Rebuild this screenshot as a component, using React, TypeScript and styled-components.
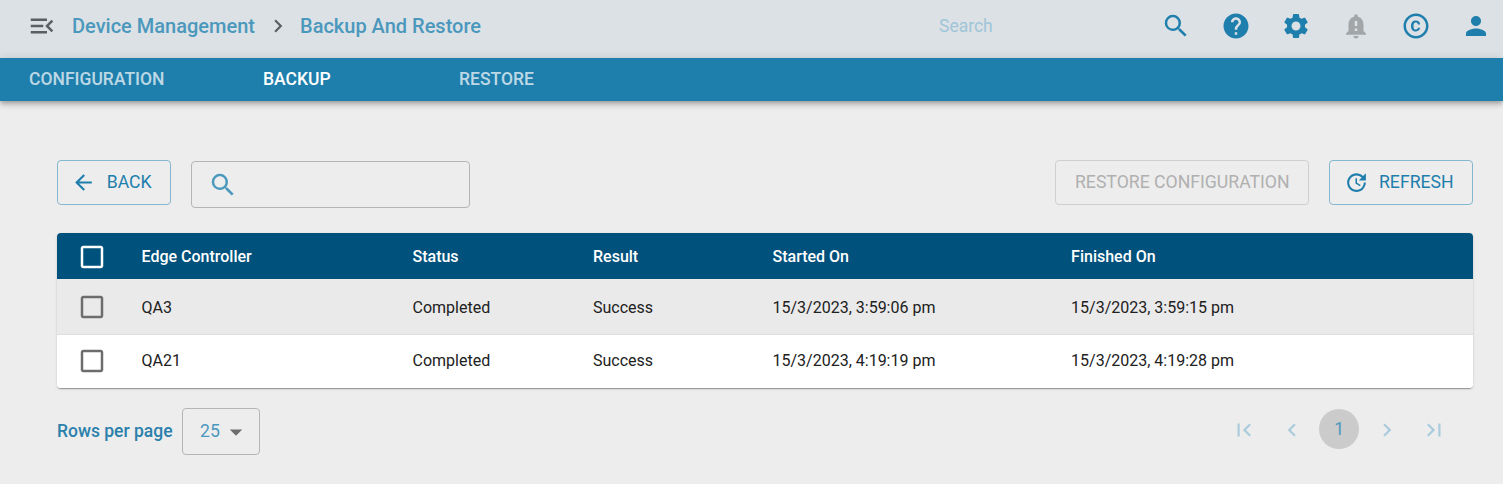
import React from "react";
import styled, { createGlobalStyle } from "styled-components";
import {
  MdArrowBack,
  MdArrowDropDown,
  MdCheckBoxOutlineBlank,
  MdChevronLeft,
  MdChevronRight,
  MdCopyright,
  MdFirstPage,
  MdHelp,
  MdLastPage,
  MdMenuOpen,
  MdNotificationImportant,
  MdPerson,
  MdSearch,
  MdSettings,
  MdUpdate,
} from "react-icons/md";

const GlobalStyle = createGlobalStyle`
  *, *::before, *::after { box-sizing: border-box; }
  body {
    margin: 0;
    background: #ededed;
    font-family: Roboto, "Liberation Sans", sans-serif;
    overflow: hidden;
  }
  svg { display: block; flex-shrink: 0; }
`;

const Page = styled.div`
  min-height: 484px;
`;

const TopBar = styled.header`
  display: flex;
  align-items: center;
  height: 58px;
  padding: 0 12px 6px 27px;
  background: #dce1e5;
  color: #1e7eac;
`;

const MenuButton = styled.div`
  width: 45px;
  color: #5c5f61;
`;

const Crumb = styled.a<{ $width: number }>`
  width: ${(p) => p.$width}px;
  font-size: 20px;
  line-height: 30px;
  font-weight: 500;
  color: #4b98bd;
  white-space: nowrap;
`;

const CrumbArrow = styled.div`
  width: 45px;
  padding-left: 10px;
  color: #5c5f61;
`;

const SearchInput = styled.div`
  margin-left: auto;
  width: 222px;
  font-size: 17.5px;
  line-height: 30px;
  color: #9fc5d8;
`;

const Actions = styled.div`
  display: flex;
  gap: 30px;
`;

const Muted = styled.span`
  color: #a2a6a8;
`;

const Tabs = styled.nav`
  display: flex;
  height: 43px;
  padding-left: 29px;
  background: #1e7eac;
  box-shadow: 0 2px 4px -1px rgba(0, 0, 0, 0.2), 0 4px 5px rgba(0, 0, 0, 0.14),
    0 1px 10px rgba(0, 0, 0, 0.12);
`;

const Tab = styled.a<{ $active?: boolean; $width: number }>`
  width: ${(p) => p.$width}px;
  font-size: 17.5px;
  line-height: 42px;
  font-weight: 500;
  color: #fff;
  opacity: ${(p) => (p.$active ? 1 : 0.7)};
`;

const Content = styled.main`
  padding: 59px 30px 0 57px;
`;

const Toolbar = styled.div`
  display: flex;
  align-items: flex-start;
  height: 73px;
`;

const Button = styled.button<{ $width: number; $start: number; $disabled?: boolean }>`
  display: flex;
  align-items: center;
  justify-content: space-between;
  width: ${(p) => p.$width}px;
  height: 45px;
  padding: 0 18.4px 1px ${(p) => p.$start}px;
  border: 1px solid ${(p) => (p.$disabled ? "#cfcfcf" : "#85b7d0")};
  border-radius: 4px;
  background: transparent;
  color: ${(p) => (p.$disabled ? "#b0b0b0" : "#1e7eac")};
  font: 400 17.65px/42px Roboto, sans-serif;
  white-space: nowrap;

  svg { margin-top: 1px; }
`;

const FilterField = styled.div`
  display: flex;
  align-items: center;
  width: 279px;
  height: 47px;
  margin: 1px auto 0 20px;
  padding-left: 16px;
  border: 1px solid #b5b5b5;
  border-radius: 4px;
  color: #4b98bd;
`;

const Right = styled.div`
  display: flex;
  gap: 20px;
`;

const Table = styled.section`
  border-radius: 4px;
  overflow: hidden;
  background: #fff;
  box-shadow: 0 2px 1px -1px rgba(0, 0, 0, 0.2), 0 1px 1px rgba(0, 0, 0, 0.14),
    0 1px 3px rgba(0, 0, 0, 0.12);
`;

const Row = styled.div<{ $kind: "head" | "odd" | "even" }>`
  display: grid;
  grid-template-columns: 64.5px 271px 180.5px 179.5px 298.6px 1fr;
  align-items: center;
  height: ${(p) => ({ head: 46, odd: 56, even: 53 })[p.$kind]}px;
  padding: ${(p) => ({ head: "1px 0 0 20px", odd: "1px 0 0 20px", even: "0 0 2px 20px" })[p.$kind]};
  background: ${(p) => ({ head: "#00517c", odd: "#eaeaea", even: "#fff" })[p.$kind]};
  border-bottom: ${(p) => (p.$kind === "odd" ? "1px solid #dedede" : "0")};
  color: ${(p) => (p.$kind === "head" ? "#fff" : "#212121")};
  font-size: 16px;
  line-height: 20px;
  font-weight: ${(p) => (p.$kind === "head" ? 500 : 400)};

  span { padding-top: ${(p) => (p.$kind === "odd" ? 1 : 0)}px; }
`;

const CheckCell = styled.div<{ $light?: boolean }>`
  color: ${(p) => (p.$light ? "#fff" : "#6d6d6d")};
`;

const Footer = styled.footer`
  display: flex;
  justify-content: space-between;
  padding-top: 20px;
`;

const PageSize = styled.div`
  display: flex;
  align-items: center;
  height: 47px;
`;

const PageSizeLabel = styled.label`
  width: 125px;
  font-size: 17.5px;
  line-height: 22px;
  padding-bottom: 2px;
  font-weight: 500;
  color: #2a80ab;
`;

const Select = styled.div`
  display: flex;
  align-items: center;
  justify-content: space-between;
  width: 78px;
  height: 47px;
  padding: 0 8px 0 17px;
  border: 1px solid #b5b5b5;
  border-radius: 4px;
  font-size: 17.7px;
  line-height: 22px;
  color: #4b98bd;

  svg { color: #6d6d6d; }
`;

const SelectValue = styled.span`
  padding-bottom: 2px;
`;

const Pager = styled.div`
  display: flex;
  align-items: center;
  height: 42px;
  padding-right: 26px;
  gap: 21.4px;
  color: #a9cbdb;

  svg { margin-top: 1px; }
`;

const CurrentPage = styled.div`
  display: flex;
  align-items: center;
  justify-content: center;
  width: 40px;
  height: 40px;
  margin: 0 -7px;
  border-radius: 50%;
  background: #cbcbcb;
  color: #4b98bd;
  font-size: 17.5px;
`;

const rows = [
  ["QA3", "Completed", "Success", "15/3/2023, 3:59:06 pm", "15/3/2023, 3:59:15 pm"],
  ["QA21", "Completed", "Success", "15/3/2023, 4:19:19 pm", "15/3/2023, 4:19:28 pm"],
];

const headings = ["Edge Controller", "Status", "Result", "Started On", "Finished On"];

export default function App() {
  return (
    <Page>
      <GlobalStyle />
      <TopBar>
        <MenuButton><MdMenuOpen size={30} /></MenuButton>
        <Crumb $width={183}>Device Management</Crumb>
        <CrumbArrow><MdChevronRight size={26} /></CrumbArrow>
        <Crumb $width={182}>Backup And Restore</Crumb>
        <SearchInput>Search</SearchInput>
        <Actions>
          <MdSearch size={30} />
          <MdHelp size={30} />
          <MdSettings size={30} />
          <Muted><MdNotificationImportant size={30} /></Muted>
          <MdCopyright size={30} />
          <MdPerson size={30} />
        </Actions>
      </TopBar>
      <Tabs>
        <Tab $width={234}>CONFIGURATION</Tab>
        <Tab $width={196} $active>BACKUP</Tab>
        <Tab $width={100}>RESTORE</Tab>
      </Tabs>
      <Content>
        <Toolbar>
          <Button $width={114} $start={13}><MdArrowBack size={25} />BACK</Button>
          <FilterField><MdSearch size={30} /></FilterField>
          <Right>
            <Button $width={254} $start={19} $disabled>RESTORE CONFIGURATION</Button>
            <Button $width={144} $start={14}><MdUpdate size={25} />REFRESH</Button>
          </Right>
        </Toolbar>
        <Table>
          <Row $kind="head">
            <CheckCell $light><MdCheckBoxOutlineBlank size={30} /></CheckCell>
            {headings.map((h) => <span key={h}>{h}</span>)}
          </Row>
          {rows.map((cells, i) => (
            <Row key={cells[0]} $kind={i % 2 ? "even" : "odd"}>
              <CheckCell><MdCheckBoxOutlineBlank size={30} /></CheckCell>
              {cells.map((c, j) => <span key={j}>{c}</span>)}
            </Row>
          ))}
        </Table>
        <Footer>
          <PageSize>
            <PageSizeLabel>Rows per page</PageSizeLabel>
            <Select><SelectValue>25</SelectValue><MdArrowDropDown size={30} /></Select>
          </PageSize>
          <Pager>
            <MdFirstPage size={26} />
            <MdChevronLeft size={26} />
            <CurrentPage>1</CurrentPage>
            <MdChevronRight size={26} />
            <MdLastPage size={26} />
          </Pager>
        </Footer>
      </Content>
    </Page>
  );
}
